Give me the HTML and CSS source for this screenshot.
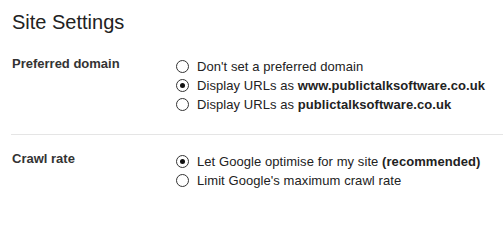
FILE: index.html
```html
<!DOCTYPE html>
<html>
<head>
<meta charset="utf-8">
<link rel="stylesheet" href="styles.css">
</head>
<body>
<div class="page">
  <h1 class="title">Site Settings</h1>
  <div class="section">
    <div class="label">Preferred domain</div>
    <div class="options">
      <div class="option"><span class="radio"></span><span class="text">Don't set a preferred domain</span></div>
      <div class="option"><span class="radio checked"></span><span class="text">Display URLs as <b>www.publictalksoftware.co.uk</b></span></div>
      <div class="option"><span class="radio"></span><span class="text">Display URLs as <b>publictalksoftware.co.uk</b></span></div>
    </div>
  </div>
  <div class="divider"></div>
  <div class="section section-crawl">
    <div class="label">Crawl rate</div>
    <div class="options">
      <div class="option"><span class="radio checked"></span><span class="text">Let Google optimise for my site <b>(recommended)</b></span></div>
      <div class="option"><span class="radio"></span><span class="text">Limit Google's maximum crawl rate</span></div>
    </div>
  </div>
</div>
</body>
</html>
```
FILE: styles.css
```css
html, body {
  margin: 0;
  padding: 0;
  background: #fff;
}
body {
  font-family: "Liberation Sans", Arial, sans-serif;
  color: #222;
}
.page {
  padding: 11px 0 0 12px;
}
.title {
  margin: 0;
  font-size: 20px;
  font-weight: normal;
  line-height: 23px;
  color: #222;
}
.section {
  display: flex;
  margin-top: 18px;
}
.label {
  width: 164px;
  flex: none;
  padding-top: 2px;
  font-size: 13px;
  font-weight: bold;
  line-height: 19px;
  color: #333;
}
.options {
  display: flex;
  flex-direction: column;
  padding-top: 5px;
}
.option {
  display: flex;
  align-items: center;
  height: 19px;
  font-size: 13px;
  letter-spacing: 0.07px;
  color: #222;
}
.option b {
  font-weight: bold;
}
.radio {
  width: 11px;
  height: 11px;
  border: 1px solid #333;
  border-radius: 50%;
  box-sizing: content-box;
  margin-right: 8px;
  display: flex;
  align-items: center;
  justify-content: center;
  background: #fff;
}
.radio.checked::after {
  content: "";
  width: 5px;
  height: 5px;
  border-radius: 50%;
  background: #111;
}
.divider {
  height: 1px;
  background: #e5e5e5;
  margin-top: 20px;
  margin-left: -1px;
}
.section-crawl {
  margin-top: 12px;
}
```
